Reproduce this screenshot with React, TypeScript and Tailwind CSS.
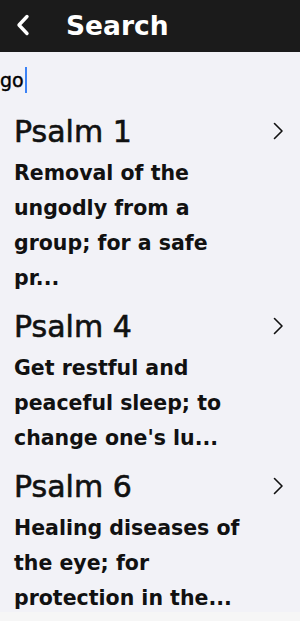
import React from "react";

const items = [
  { title: "Psalm 1", desc: "Removal of the ungodly from a group; for a safe pr..." },
  { title: "Psalm 4", desc: "Get restful and peaceful sleep; to change one's lu..." },
  { title: "Psalm 6", desc: "Healing diseases of the eye; for protection in the..." },
];

export default function App() {
  return (
    <div
      className="w-[300px] h-[621px] overflow-hidden bg-[#f2f2f7] flex flex-col relative"
      style={{ fontFamily: "'DejaVu Sans', 'Noto Sans', sans-serif" }}
    >
      <div className="h-[52px] shrink-0 bg-[#1b1b1b] flex items-center">
        <svg width="14" height="22" viewBox="0 0 14 22" className="ml-[16px] -mt-[2px]" fill="none">
          <path d="M11 2.5 L3 11 L11 19.5" stroke="white" strokeWidth="3.4" strokeLinecap="round" strokeLinejoin="round" />
        </svg>
        <span className="ml-[36px] text-white text-[26.5px] font-bold leading-none">Search</span>
      </div>
      <div className="h-[56px] shrink-0 flex items-center">
        <span className="text-[19px] text-black leading-none [-webkit-text-stroke:0.4px_#000]">go</span>
        <span className="w-[2px] h-[26px] bg-[#3b82f6] ml-[1px]" />
      </div>
      <div className="flex flex-col">
        {items.map((it) => (
          <div key={it.title} className="flex pl-[14px] pr-[16px] pb-[7px]">
            <div className="flex-1">
              <div className="text-[30px] text-[#111] leading-[48px] [-webkit-text-stroke:0.6px_#111]">{it.title}</div>
              <div className="w-[238px] text-[20.5px] font-bold text-[#111] leading-[35px]">{it.desc}</div>
            </div>
            <svg width="12" height="18" viewBox="0 0 12 18" className="mt-[13.5px]" fill="none">
              <path d="M2.5 1.5 L10 9 L2.5 16.5" stroke="#111" strokeWidth="1.6" strokeLinecap="round" strokeLinejoin="round" />
            </svg>
          </div>
        ))}
      </div>
      <div className="absolute left-0 right-0 bottom-0 h-[9px] bg-[#f6f6f6]" />
    </div>
  );
}
